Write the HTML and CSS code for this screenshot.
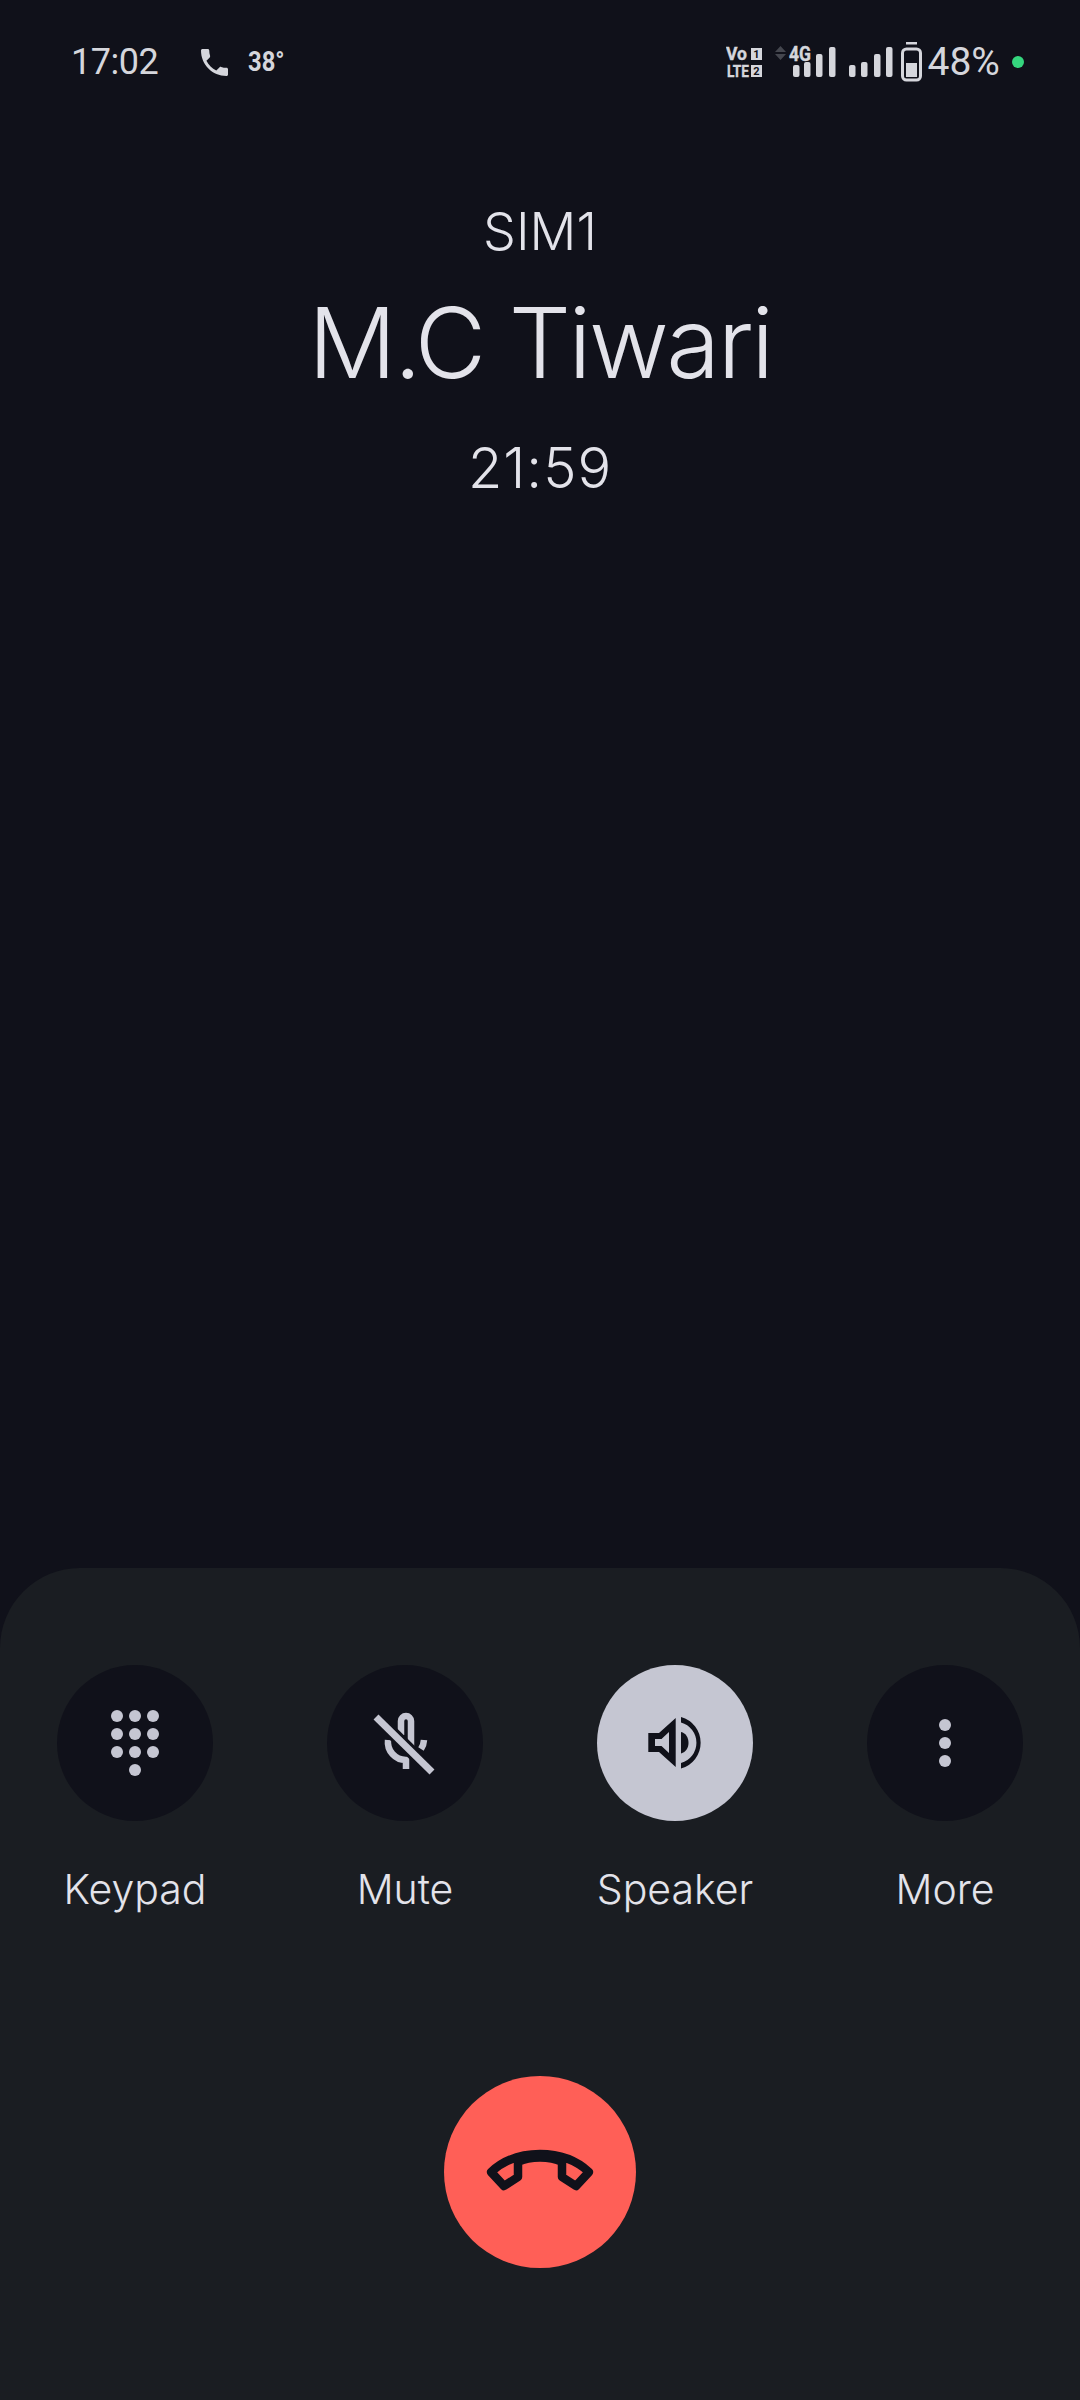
FILE: index.html
```html
<!DOCTYPE html>
<html lang="en">
<head>
    <meta charset="UTF-8">
    <meta name="viewport" content="width=device-width, initial-scale=1.0">
    <title>Call</title>
    <link rel="stylesheet" href="styles.css">
</head>
<body>
    <div class="screen">
        <div class="status-bar">
            <span class="status-time">17:02</span>
            <svg class="status-call" viewBox="3 3 18 18"><path d="M6.62 10.79c1.44 2.83 3.76 5.14 6.59 6.59l2.2-2.2c.27-.27.67-.36 1.02-.24 1.12.37 2.33.57 3.57.57.55 0 1 .45 1 1V20c0 .55-.45 1-1 1-9.39 0-17-7.61-17-17 0-.55.45-1 1-1h3.5c.55 0 1 .45 1 1 0 1.25.2 2.45.57 3.57.11.35.03.74-.25 1.02l-2.2 2.2z"/></svg>
            <span class="status-temp">38°</span>
            <svg class="status-net" viewBox="0 0 172 40" width="172" height="40">
                <text class="net-text" x="0" y="18" font-size="18" textLength="21" lengthAdjust="spacingAndGlyphs">Vo</text>
                <text class="net-text" x="1" y="35" font-size="17" textLength="22" lengthAdjust="spacingAndGlyphs">LTE</text>
                <rect class="net-fill" x="25" y="6" width="11" height="12"/>
                <rect class="net-fill" x="25" y="23" width="11" height="12"/>
                <text class="net-digit" x="30.5" y="16" font-size="11">1</text>
                <text class="net-digit" x="30.5" y="33" font-size="11">2</text>
                <path class="net-arrow" d="M54.500 4l5.500 6h-11zM54.500 18l5.500-6h-11z"/>
                <text class="net-text" x="63" y="19" font-size="20" textLength="22" lengthAdjust="spacingAndGlyphs">4G</text>
                <rect class="net-fill" x="67" y="23" width="6.500" height="12" rx="2"/>
                <rect class="net-fill" x="78" y="20" width="6.500" height="15" rx="2"/>
                <rect class="net-fill" x="90" y="12" width="6.500" height="23" rx="2"/>
                <rect class="net-fill" x="103" y="5" width="6.500" height="30" rx="2"/>
                <rect class="net-fill" x="123" y="23" width="6.500" height="12" rx="2"/>
                <rect class="net-fill" x="135" y="20" width="6.500" height="15" rx="2"/>
                <rect class="net-fill" x="148" y="12" width="6.500" height="23" rx="2"/>
                <rect class="net-fill" x="160" y="5" width="6.500" height="30" rx="2"/>
            </svg>
            <svg class="status-battery" viewBox="0 0 21 40" width="21" height="40">
                <rect class="net-fill" x="5" y="0" width="11" height="2.500"/>
                <rect class="battery-shell" x="1.500" y="7" width="18" height="31" rx="4"/>
                <rect class="net-fill" x="5" y="21" width="11" height="14"/>
            </svg>
            <span class="status-percent">48%</span>
            <span class="status-dot"></span>
        </div>

        <div class="caller">
            <div class="caller-sim">SIM1</div>
            <div class="caller-name">M.C Tiwari</div>
            <div class="caller-time">21:59</div>
        </div>

        <div class="panel">
            <div class="actions">
                <div class="action">
                    <div class="action-btn">
                        <svg class="icon" viewBox="0 0 80 80">
                            <circle cx="22" cy="13" r="6"/><circle cx="40" cy="13" r="6"/><circle cx="58" cy="13" r="6"/>
                            <circle cx="22" cy="31" r="6"/><circle cx="40" cy="31" r="6"/><circle cx="58" cy="31" r="6"/>
                            <circle cx="22" cy="49" r="6"/><circle cx="40" cy="49" r="6"/><circle cx="58" cy="49" r="6"/>
                            <circle cx="40" cy="67" r="6"/>
                        </svg>
                    </div>
                    <div class="action-label">Keypad</div>
                </div>
                <div class="action">
                    <div class="action-btn">
                        <svg class="icon" viewBox="0 0 80 80">
                            <g class="mic">
                                <path d="M36 32V18a5 5 0 0 1 10 0V46"/>
                                <path d="M23 37a18 18 0 0 0 18 20V66"/>
                                <path d="M59 37a18 18 0 0 1-3 9"/>
                            </g>
                            <path class="mic-gap" d="M11 14L67 69"/>
                            <path class="mic-slash" d="M11 14L67 69"/>
                        </svg>
                    </div>
                    <div class="action-label">Mute</div>
                </div>
                <div class="action">
                    <div class="action-btn action-btn-on">
                        <svg class="icon" viewBox="0 0 80 80">
                            <path fill-rule="evenodd" d="M13.300 30H24L40.700 15V64L24 49H13.300ZM20 36V43H26.500L34 50V29L26.500 36Z"/>
                            <path d="M46 14A26.700 26.700 0 0 1 46 65.500V60A21 21 0 0 0 46 19.500Z"/>
                            <path d="M46 29C51 30 53.500 35 53.500 39.800C53.500 45 51 49 46 50.500Z"/>
                        </svg>
                    </div>
                    <div class="action-label">Speaker</div>
                </div>
                <div class="action">
                    <div class="action-btn">
                        <svg class="icon" viewBox="0 0 80 80">
                            <circle cx="40" cy="22" r="6"/><circle cx="40" cy="40" r="6"/><circle cx="40" cy="58" r="6"/>
                        </svg>
                    </div>
                    <div class="action-label">More</div>
                </div>
            </div>
            <div class="end-call">
                <svg class="end-icon" viewBox="0 0 120 120">
                    <path d="M11 60C25 47 42 42 60 42C78 42 95 47 109 60L96 74L82 65V50C70 44 50 44 38 50V65L24 74Z"/>
                </svg>
            </div>
        </div>
    </div>
</body>
</html>
```

FILE: styles.css
```css
body {
    margin: 0;
    background-color: #10111a;
    font-family: Inter, "Noto Sans", sans-serif;
    color: #e3e3ea;
}

.screen {
    width: 1080px;
    height: 2400px;
    display: flex;
    flex-direction: column;
    overflow: hidden;
}

/* status bar */
.status-bar {
    display: flex;
    align-items: center;
    height: 124px;
    padding-left: 71px;
    font-family: Roboto, sans-serif;
    color: #d5d6dc;
}

.status-time {
    font-size: 36px;
    letter-spacing: -0.5px;
    width: 130px;
}

.status-call {
    width: 27px;
    height: 27px;
    fill: #d5d6dc;
}

.status-temp {
    font-size: 27px;
    font-weight: 700;
    margin-left: 20px;
    display: inline-block;
    transform: scaleX(0.88);
    transform-origin: left center;
}

.status-net {
    margin-left: 436px;
    flex-shrink: 0;
}

.net-text,
.net-digit {
    font-family: Roboto, sans-serif;
    font-weight: 700;
    fill: #d5d6dc;
}

.net-text {
    stroke: #d5d6dc;
    stroke-width: 0.4;
}

.net-digit {
    fill: #10111a;
    text-anchor: middle;
}

.net-fill {
    fill: #d5d6dc;
}

.net-arrow {
    fill: #44464e;
}

.status-battery {
    margin-left: 3px;
    flex-shrink: 0;
}

.battery-shell {
    fill: none;
    stroke: #d5d6dc;
    stroke-width: 3;
}

.status-percent {
    font-size: 39px;
    margin-left: 6px;
}

.status-dot {
    width: 12px;
    height: 12px;
    border-radius: 50%;
    background-color: #35d67e;
    margin-left: 12px;
}

/* caller */
.caller {
    text-align: center;
    font-weight: 300;
}

.caller-sim {
    font-size: 52px;
    line-height: 64px;
    margin-top: 76px;
}

.caller-name {
    font-size: 98px;
    font-weight: 350;
    letter-spacing: -2.5px;
    line-height: 120px;
    margin-top: 19px;
}

.caller-time {
    font-size: 56px;
    letter-spacing: 1px;
    line-height: 64px;
    margin-top: 33px;
}

/* bottom panel */
.panel {
    margin-top: auto;
    height: 832px;
    box-sizing: border-box;
    padding-top: 97px;
    background-color: #1a1d22;
    border-radius: 80px 80px 0 0;
}

.actions {
    display: grid;
    grid-template-columns: repeat(4, 1fr);
}

.action {
    display: flex;
    flex-direction: column;
    align-items: center;
}

.action-btn {
    width: 156px;
    height: 156px;
    border-radius: 50%;
    background-color: #10111a;
    display: flex;
    align-items: center;
    justify-content: center;
}

.action-btn-on {
    background-color: #c5c6d2;
}

.icon {
    width: 80px;
    height: 80px;
    fill: #c5c6d2;
}

.action-btn-on .icon {
    fill: #10111a;
}

.mic path {
    fill: none;
    stroke: #c5c6d2;
    stroke-width: 6.5;
}

.mic-gap {
    fill: none;
    stroke: #10111a;
    stroke-width: 13;
}

.mic-slash {
    fill: none;
    stroke: #c5c6d2;
    stroke-width: 7;
}

.action-label {
    font-size: 41px;
    font-weight: 300;
    line-height: 50px;
    margin-top: 43px;
}

.end-call {
    width: 192px;
    height: 192px;
    margin: 162px auto 0;
    border-radius: 50%;
    background-color: #ff5f57;
    display: flex;
    align-items: center;
    justify-content: center;
}

.end-icon {
    width: 120px;
    height: 120px;
    fill: none;
    stroke: #10111a;
    stroke-width: 8.5;
    stroke-linejoin: round;
}
```
